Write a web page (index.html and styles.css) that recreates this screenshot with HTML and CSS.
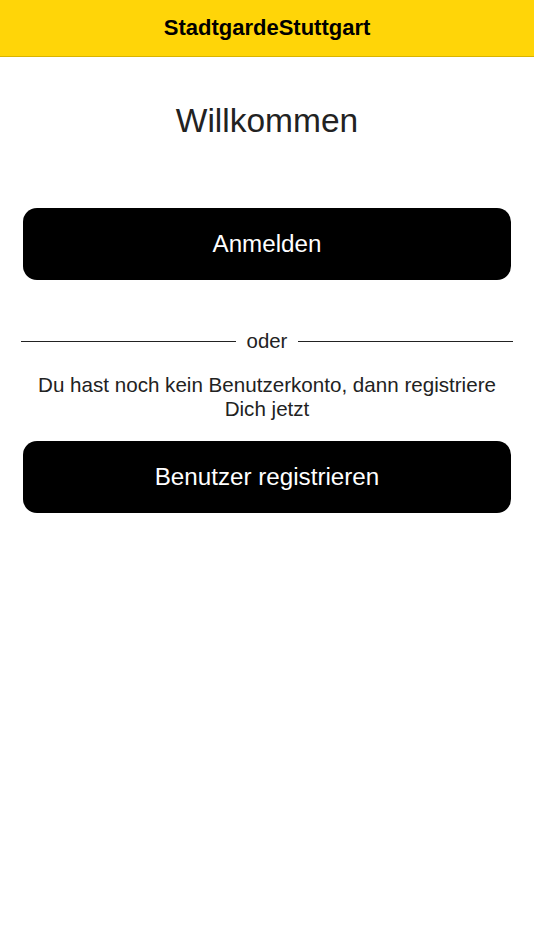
FILE: index.html
```html
<!DOCTYPE html>
<html lang="de">
<head>
<meta charset="utf-8">
<title>StadtgardeStuttgart</title>
<link rel="stylesheet" href="styles.css">
</head>
<body>
<header class="topbar">
  <h1 class="brand">StadtgardeStuttgart</h1>
</header>
<main class="content">
  <h2 class="welcome">Willkommen</h2>
  <button class="btn btn-login" type="button">Anmelden</button>
  <div class="divider">
    <span class="divider-line"></span>
    <span class="divider-text">oder</span>
    <span class="divider-line"></span>
  </div>
  <p class="hint">Du hast noch kein Benutzerkonto, dann registriere Dich jetzt</p>
  <button class="btn btn-register" type="button">Benutzer registrieren</button>
</main>
</body>
</html>
```

FILE: styles.css
```css
* { box-sizing: border-box; }
html, body {
  margin: 0;
  padding: 0;
  background: #ffffff;
  font-family: "Liberation Sans", Arial, sans-serif;
  color: #222222;
}
.topbar {
  height: 57px;
  background: #ffd508;
  border-bottom: 1px solid #d9b400;
  display: flex;
  align-items: center;
  justify-content: center;
}
.brand {
  margin: 0;
  font-size: 22px;
  font-weight: bold;
  color: #000;
}
.content {
  padding: 0 23px;
  display: flex;
  flex-direction: column;
}
.welcome {
  margin: 44px 0 0;
  font-size: 33.5px;
  font-weight: normal;
  line-height: 40px;
  text-align: center;
  color: #222;
}
.btn {
  display: block;
  width: 100%;
  height: 72px;
  border: none;
  border-radius: 14px;
  background: #000;
  color: #fff;
  font-family: "Liberation Sans", Arial, sans-serif;
  font-size: 24.2px;
  padding: 0;
}
.btn-login { margin-top: 67px; }
.divider {
  margin: 48px -2px 0;
  display: flex;
  align-items: center;
  gap: 11px;
  height: 26px;
}
.divider-line {
  flex: 1;
  height: 1px;
  background: #222;
  margin-top: 1px;
}
.divider-text {
  font-size: 20.4px;
  line-height: 24px;
}
.hint {
  margin: 19px 0 0;
  font-size: 20.6px;
  line-height: 24px;
  text-align: center;
}
.btn-register { margin-top: 20px; }
```
